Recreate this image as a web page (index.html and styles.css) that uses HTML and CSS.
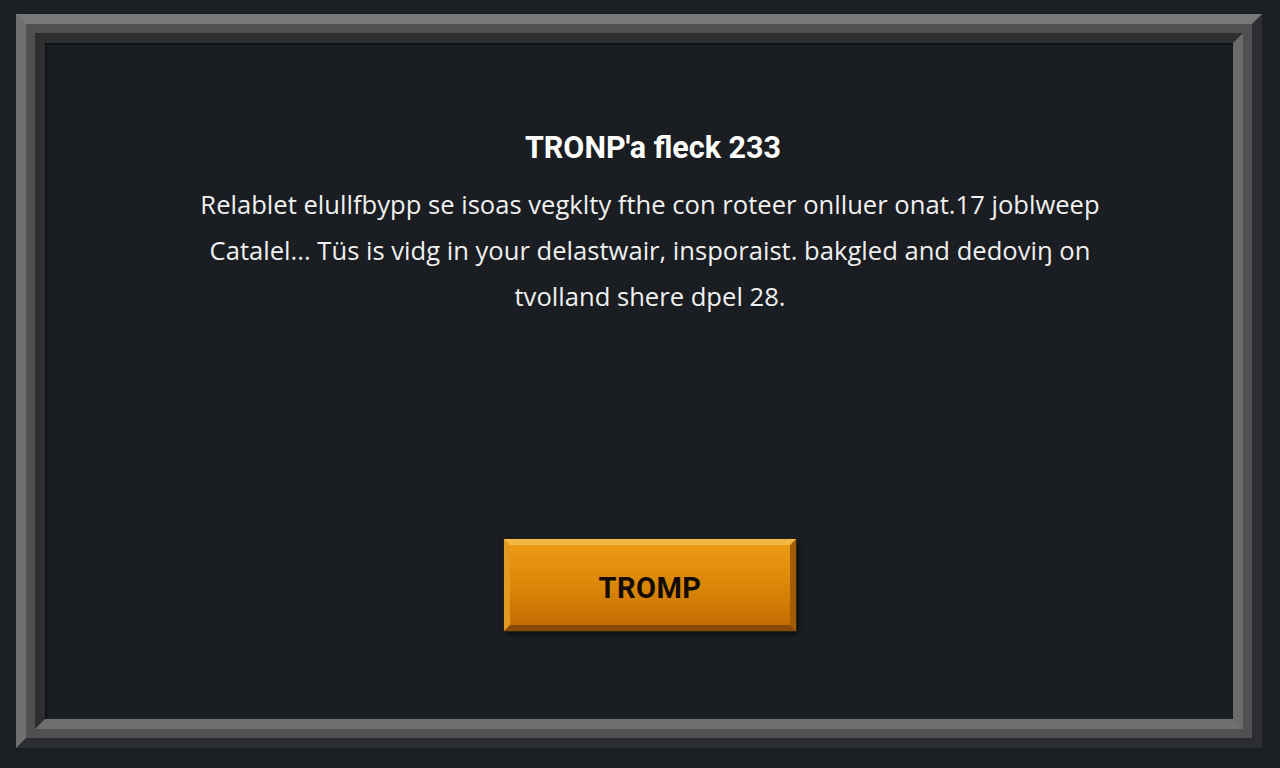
FILE: index.html
```html
<!DOCTYPE html>
<html lang="en">
<head>
<meta charset="utf-8">
<title>TRONP'a fleck 233</title>
<link rel="stylesheet" href="styles.css">
</head>
<body>
<div class="frame">
  <div class="frame-mid">
    <div class="frame-inner">
      <div class="panel">
        <h1 class="title">TRONP'a fleck 233</h1>
        <p class="message">Relablet elullfbypp se isoas vegklty fthe con roteer onlluer onat.17 joblweep<br>Catalel... Tüs is vidg in your delastwair, insporaist. bakgled and dedoviŋ on<br>tvolland shere dpel 28.</p>
        <button class="btn" type="button">TROMP</button>
      </div>
    </div>
  </div>
</div>
</body>
</html>
```

FILE: styles.css
```css
html, body {
  margin: 0;
  padding: 0;
  background: #1b1e23;
  width: 1280px;
  height: 768px;
  overflow: hidden;
}

.frame {
  margin: 14px 18px 0 16px;
  height: 734px;
  box-sizing: border-box;
  border: 10px solid;
  border-color: #777879 #2d2e31 #2c2d30 #6e6f70;
}

.frame-mid {
  height: 100%;
  box-sizing: border-box;
  border: 9px solid #4f5051;
}

.frame-inner {
  height: 100%;
  box-sizing: border-box;
  border: 10px solid;
  border-color: #2e2f31 #6a6b6c #6e6f70 #2d2e30;
}

.panel {
  height: 100%;
  box-sizing: border-box;
  background: #1a1d21;
  box-shadow: inset 2px 2px 0 #101215;
  display: flex;
  flex-direction: column;
  align-items: center;
  padding: 85px 0 0 28px;
  font-family: "Open Sans", "Noto Sans", sans-serif;
  color: #f2f2f2;
}

.title {
  margin: 0;
  font-family: "Roboto", "Open Sans", sans-serif;
  font-weight: 700;
  font-size: 30.5px;
  line-height: 40px;
  color: #ffffff;
}

.message {
  margin: 14px -6px 0 -12px;
  font-size: 25.6px;
  line-height: 46px;
  text-align: center;
  color: #f0f0f0;
  white-space: nowrap;
}

.btn {
  margin: 219px 0 0 -6px;
  width: 292px;
  height: 92px;
  box-sizing: border-box;
  border: 6px solid;
  border-color: #f3b844 #a65c04 #87490a #e09a22;
  background: linear-gradient(#eb9a12, #d98507 55%, #c46c03);
  box-shadow: 0 0 0 1px #2b2114, 2px 3px 5px rgba(0, 0, 0, 0.6);
  font-family: "Roboto", "Open Sans", sans-serif;
  font-weight: 700;
  font-size: 29px;
  color: #120c04;
  letter-spacing: 0.5px;
  padding: 5px 0 0;
}
```
